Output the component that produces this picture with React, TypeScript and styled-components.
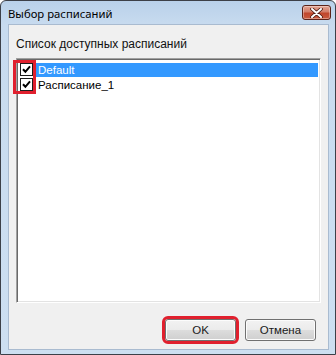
import styled, { createGlobalStyle } from "styled-components";

const GlobalStyle = createGlobalStyle`
  html, body {
    margin: 0;
    padding: 0;
    background: #ffffff;
  }
`;

const schedules = [
  { name: "Default", checked: true, selected: true },
  { name: "Расписание_1", checked: true, selected: false },
];

const CheckMark = () => (
  <svg width="9" height="9" viewBox="0 0 9 9">
    <path d="M1 4.2 L3.4 6.8 L8 1.4" fill="none" stroke="#000" strokeWidth="2" />
  </svg>
);

const CloseGlyph = () => (
  <svg width="13" height="10" viewBox="0 0 13 10">
    <path d="M2 1 L11 9 M11 1 L2 9" stroke="#4a1a12" strokeWidth="3.6" strokeLinecap="round" />
    <path d="M2 1 L11 9 M11 1 L2 9" stroke="#ffffff" strokeWidth="2" strokeLinecap="round" />
  </svg>
);

const App = () => {
  return (
    <>
      <GlobalStyle />
      <Window>
        <TitleBar>
          <Title>Выбор расписаний</Title>
          <CloseButton>
            <CloseGlyph />
          </CloseButton>
        </TitleBar>
        <Client>
          <Label>Список доступных расписаний</Label>
          <ListBox>
            <Rows>
              <Marker />
              {schedules.map((s) => (
                <Row key={s.name}>
                  <CheckBox>{s.checked && <CheckMark />}</CheckBox>
                  <ItemText $selected={s.selected}>{s.name}</ItemText>
                </Row>
              ))}
            </Rows>
          </ListBox>
          <ButtonRow>
            <Button $marked>OK</Button>
            <Button>Отмена</Button>
          </ButtonRow>
        </Client>
      </Window>
    </>
  );
};

const Window = styled.div`
  width: 336px;
  height: 355px;
  box-sizing: border-box;
  display: flex;
  flex-direction: column;
  background: linear-gradient(to bottom, #b9d1ea 0px, #c8dbef 24px, #cddff1 100%);
  border: 1px solid #3c4048;
  border-radius: 6px 6px 0 0;
  padding: 0 6px 4px 7px;
  font-family: "Liberation Sans", Arial, sans-serif;
`;

const TitleBar = styled.div`
  height: 23px;
  display: flex;
  align-items: center;
  justify-content: space-between;
`;

const Title = styled.span`
  font-family: "Noto Sans", "Open Sans", sans-serif;
  font-size: 11.3px;
  color: #000000;
  position: relative;
  top: 1px;
`;

const CloseButton = styled.div`
  width: 29px;
  height: 15px;
  box-sizing: border-box;
  margin-top: 0;
  margin-right: -2px;
  border: 1px solid #5a231a;
  border-radius: 3px;
  background: linear-gradient(to bottom, #e3a594 0%, #d27d68 45%, #c0462c 55%, #c95a3e 100%);
  box-shadow: inset 0 0 0 1px rgba(255, 255, 255, 0.35);
  display: flex;
  align-items: center;
  justify-content: center;
`;

const Client = styled.div`
  flex: 1;
  display: flex;
  flex-direction: column;
  background: #f0f0f0;
  border: 1px solid #a9bbd0;
  padding: 12px 7px 8px 7px;
`;

const Label = styled.div`
  font-family: "Liberation Sans", Tahoma, sans-serif;
  font-size: 12px;
  color: #111111;
  height: 14px;
  line-height: 14px;
  padding-left: 0;
`;

const ListBox = styled.div`
  margin-top: 7px;
  flex: 1;
  background: #ffffff;
  border-top: 1px solid #a0a0a0;
  border-left: 1px solid #a0a0a0;
  border-right: 1px solid #ffffff;
  border-bottom: 1px solid #ffffff;
  box-shadow: inset 1px 1px 0 #696969, inset -1px -1px 0 #e3e3e3;
  padding: 3px 2px 2px 2px;
`;

const Rows = styled.div`
  position: relative;
  display: flex;
  flex-direction: column;
`;

const Marker = styled.div`
  position: absolute;
  left: -6px;
  top: -2px;
  width: 23px;
  height: 34px;
  box-sizing: border-box;
  border: 3px solid #e0202e;
  pointer-events: none;
`;

const Row = styled.div`
  display: flex;
  align-items: center;
  height: 15px;
`;

const CheckBox = styled.div`
  width: 13px;
  height: 13px;
  box-sizing: border-box;
  margin: 0 3px 0 1px;
  border: 1px solid #1c1c1c;
  background: #ffffff;
  display: flex;
  align-items: center;
  justify-content: center;
`;

const ItemText = styled.div<{ $selected?: boolean }>`
  flex: 1;
  height: 14px;
  line-height: 14px;
  padding-left: 2px;
  font-family: "Liberation Sans", Tahoma, sans-serif;
  font-size: 11.5px;
  color: ${(p) => (p.$selected ? "#ffffff" : "#000000")};
  background: ${(p) => (p.$selected ? "#3399ff" : "transparent")};
`;

const ButtonRow = styled.div`
  display: flex;
  justify-content: flex-end;
  gap: 9px;
  margin-top: 16px;
  padding-right: 5px;
`;

const Button = styled.div<{ $marked?: boolean }>`
  width: 71px;
  height: 22px;
  box-sizing: border-box;
  border: 1px solid #707070;
  border-radius: 3px;
  background: linear-gradient(to bottom, #f2f2f2 0%, #ebebeb 50%, #dddddd 51%, #cfcfcf 100%);
  box-shadow: inset 0 0 0 1px #fcfcfc;
  display: flex;
  align-items: center;
  justify-content: center;
  font-family: "Liberation Sans", Tahoma, sans-serif;
  font-size: 11.5px;
  font-weight: 400;
  color: #1a1a1a;
  outline: ${(p) => (p.$marked ? "3px solid #e0202e" : "none")};
  outline-offset: 0;
`;

export default App;
